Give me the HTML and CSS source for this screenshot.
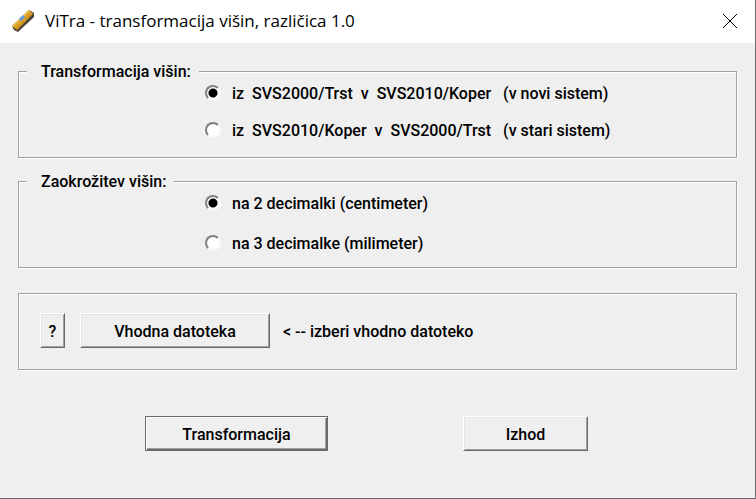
FILE: index.html
```html
<!DOCTYPE html>
<html lang="sl">
<head>
    <meta charset="UTF-8">
    <meta name="viewport" content="width=device-width, initial-scale=1.0">
    <title>ViTra - transformacija višin, različica 1.0</title>
    <link rel="stylesheet" href="styles.css">
</head>
<body>
    <div class="window">
        <header class="titlebar">
            <svg class="app-icon" width="24" height="24" viewBox="0 0 24 24" aria-hidden="true">
                <path d="M1 17 L18 1 L23 4 L23 8 L7 23 L3 21 Z" fill="#4a4238"/>
                <path d="M1 17 L18 1 L22 5 L6 21 Z" fill="#dca022"/>
                <path d="M1 17 L18 1 L19 2 L2 18 Z" fill="#f0c455"/>
                <path d="M5 20 L21 5" stroke="#a87510" stroke-width="1" stroke-dasharray="1 1"/>
                <path d="M8 10 L12 6 L14 8 L10 12 Z" fill="#5b9cec"/>
            </svg>
            <h1>ViTra - transformacija višin, različica 1.0</h1>
            <button type="button" class="close" aria-label="Zapri">
                <svg width="16" height="16" viewBox="0 0 16 16" aria-hidden="true">
                    <path d="M1 1 L15 15 M15 1 L1 15" stroke="#000" stroke-width="1" fill="none"/>
                </svg>
            </button>
        </header>

        <form class="content">
            <fieldset class="group">
                <legend>Transformacija višin:</legend>
                <div class="options">
                    <label><input type="radio" name="smer" value="novi" checked><span>iz  SVS2000/Trst  v  SVS2010/Koper   (v novi sistem)</span></label>
                    <label><input type="radio" name="smer" value="stari"><span>iz  SVS2010/Koper  v  SVS2000/Trst   (v stari sistem)</span></label>
                </div>
            </fieldset>

            <fieldset class="group">
                <legend>Zaokrožitev višin:</legend>
                <div class="options rounding">
                    <label><input type="radio" name="decimalke" value="2" checked><span>na 2 decimalki (centimeter)</span></label>
                    <label><input type="radio" name="decimalke" value="3"><span>na 3 decimalke (milimeter)</span></label>
                </div>
            </fieldset>

            <div class="group file">
                <button type="button" class="btn help">?</button>
                <button type="button" class="btn browse">Vhodna datoteka</button>
                <span>&lt; -- izberi vhodno datoteko</span>
            </div>

            <div class="actions">
                <button type="submit" class="btn default">Transformacija</button>
                <button type="button" class="btn exit">Izhod</button>
            </div>
        </form>
    </div>
</body>
</html>
```

FILE: styles.css
```css
* {
    box-sizing: border-box;
}
body {
    margin: 0;
    background: #efefef;
    color: #000;
    font-family: Roboto, "Liberation Sans", sans-serif;
    font-size: 16px;
    font-weight: 500;
    line-height: 20px;
}
.window {
    min-height: 100vh;
    border-right: 1px solid #6a6a6a;
    border-bottom: 1px solid #6a6a6a;
}
.titlebar {
    display: flex;
    align-items: center;
    height: 43px;
    padding: 0 17px 2px 11px;
    background: #fff;
}
.titlebar h1 {
    flex: 1;
    margin: 0 0 0 10px;
    font-family: "Open Sans", "Noto Sans", sans-serif;
    font-size: 17px;
    font-weight: 400;
}
.close {
    display: flex;
    padding: 0;
    border: none;
    background: none;
}
.content {
    padding: 17px 18px;
}
.group {
    min-width: 0;
    margin: 0 0 12px;
    padding: 0;
    border: 1px solid #a0a0a0;
    box-shadow: 1px 1px 0 #fff, inset 1px 1px 0 #fff;
}
legend {
    margin-left: 8px;
    padding: 2px 8px 0 14px;
    background: #efefef;
}
.options {
    display: flex;
    flex-direction: column;
    gap: 15px;
    padding: 0 0 16px 186px;
}
.options.rounding {
    gap: 18px;
    padding-bottom: 13px;
}
.options label {
    display: flex;
    align-items: center;
    white-space: pre;
}
.options span,
.file span {
    padding-top: 2px;
}
input[type="radio"] {
    appearance: none;
    width: 16px;
    height: 16px;
    margin: 0 11px 0 0;
    border: 2px solid;
    border-color: #808080 #f8f8f8 #f8f8f8 #808080;
    border-radius: 50%;
    background: #fff;
}
input[type="radio"]:checked {
    background: radial-gradient(circle, #000 4px, #fff 5px);
}
.file {
    display: flex;
    align-items: center;
    margin-top: 25px;
    padding: 19px 21px 21px;
}
.btn {
    height: 35px;
    padding: 2px 0 0;
    border: 1px solid;
    border-color: #fff #696969 #696969 #fff;
    border-radius: 0;
    background: #efefef;
    box-shadow: inset 1px 1px 0 #e3e3e3, inset -1px -1px 0 #a0a0a0;
    color: #000;
    font: inherit;
}
.help {
    width: 25px;
    margin-right: 15px;
}
.browse {
    width: 190px;
    margin-right: 13px;
}
.actions {
    display: flex;
    gap: 135px;
    margin-top: 46px;
    padding-left: 127px;
}
.default {
    width: 183px;
    border-color: #696969;
    box-shadow: inset 1px 1px 0 #fff, inset -1px -1px 0 #696969, inset -2px -2px 0 #a0a0a0;
}
.exit {
    width: 125px;
}
```
